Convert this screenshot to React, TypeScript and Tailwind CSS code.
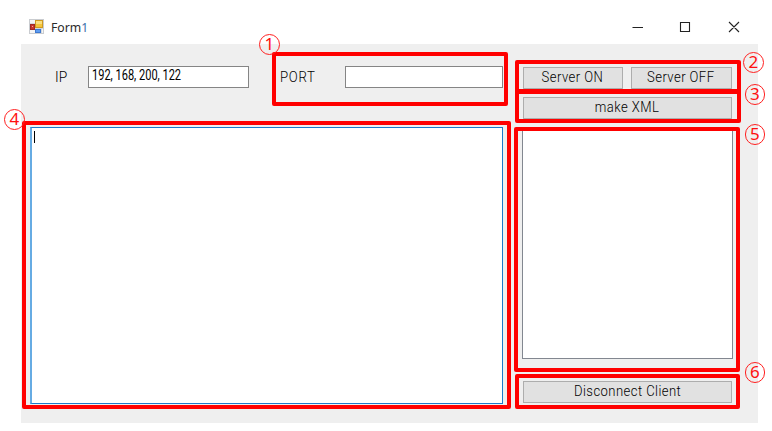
import type { ReactNode } from "react";

const frames = [
  "left-[272px] top-[52px] w-[236px] h-[54px]",
  "left-[515px] top-[60px] w-[226px] h-[34px]",
  "left-[515px] top-[89px] w-[226px] h-[34px]",
  "left-[22px] top-[121px] w-[489px] h-[288px]",
  "left-[514px] top-[127px] w-[226px] h-[245px]",
  "left-[515px] top-[374px] w-[225px] h-[35px]",
];

const badges = [
  "left-[259px] top-[34px]",
  "left-[743px] top-[52px]",
  "left-[744.5px] top-[84px]",
  "left-[4px] top-[109px]",
  "left-[744.5px] top-[124px]",
  "left-[744.5px] top-[362px]",
];

function Button({ className, children }: { className: string; children: ReactNode }) {
  return (
    <button
      className={`flex h-[22px] items-center justify-center whitespace-nowrap border border-[#adadad] bg-[#e1e1e1] pb-[2px] leading-none ${className}`}
    >
      <span className="inline-block scale-x-[0.87] tracking-[0.5px]">{children}</span>
    </button>
  );
}

function FormIcon() {
  return (
    <svg width="15" height="15" viewBox="0 0 15 15">
      <rect x="0.5" y="0.5" width="14" height="14" fill="#f4f4f4" stroke="#c9ccd0" />
      <path d="M6.5 1v13M1 9.5h13M1 4.5h5M12.5 10v4" stroke="#d5d8dc" fill="none" />
      <rect x="6.5" y="1.5" width="7" height="7" fill="#f5c53b" stroke="#cf9a20" />
      <path d="M7 2h6v3H7z" fill="#fbdf7c" />
      <rect x="1.5" y="5.5" width="4" height="5" fill="#c9352a" stroke="#9f2a23" />
      <path d="M3 7h1v1H3z" fill="#f3a59c" />
      <rect x="6.5" y="10.5" width="5" height="3" fill="#5d9cf0" stroke="#3e79d0" />
    </svg>
  );
}

export default function App() {
  return (
    <div className="relative h-[431px] w-[772px] overflow-hidden bg-white font-['Roboto','Noto_Sans_CJK_KR',sans-serif] text-[15px] font-light text-black">
      <div className="ml-[21px] flex w-[737px] flex-col">
        <header className="flex h-[44px] shrink-0 items-start pl-[8px] pt-[19px]">
          <FormIcon />
          <h1 className="ml-[7px] w-[36px] whitespace-nowrap font-['Noto_Sans',sans-serif] text-[13px] font-normal leading-[16px] text-[#2a2a2a]">
            <span className="inline-block origin-left scale-x-[0.94]">
              Form<span className="text-[#3a6ea8]">1</span>
            </span>
          </h1>
          <svg className="ml-[545px]" width="108" height="15" viewBox="0 0 108 15" fill="none" stroke="#222" strokeWidth="1.1">
            <path d="M0.5 8.5h10.5M48.5 3.5h9v9h-9zM97 3l10 10M107 3L97 13" />
          </svg>
        </header>

        <main className="flex h-[379px] bg-[#efefef]">
          <section className="ml-[9px] flex w-[473px] flex-col pt-[22px]">
            <div className="flex h-[22px]">
              <label className="w-[58px] pl-[25px] leading-[22px]">
                <span className="inline-block origin-left scale-x-[0.92]">IP</span>
              </label>
              <div className="w-[161px] border border-[#858585] bg-white pl-[3px] leading-[17px]">
                <span className="inline-block origin-left scale-x-[0.735] whitespace-nowrap font-normal">192, 168, 200, 122</span>
              </div>
              <label className="w-[96px] pl-[31px] leading-[22px]">
                <span className="inline-block origin-left scale-x-[0.88] tracking-[0.8px]">PORT</span>
              </label>
              <div className="w-[158px] border border-[#858585] bg-white" />
            </div>
            <div className="mt-[39px] h-[277px] border border-l-2 border-[#1b7acb] border-l-[#66abe3] bg-white pl-[2px] pt-[3px]">
              <div className="h-[12px] w-px bg-black" />
            </div>
          </section>

          <aside className="ml-[19px] flex w-[211px] flex-col pt-[23px]">
            <div className="flex justify-between px-px">
              <Button className="w-[100px] pr-[2px]">Server ON</Button>
              <Button className="w-[101px] pr-[2px]">Server OFF</Button>
            </div>
            <Button className="mx-px mt-[8px]">make XML</Button>
            <div className="mt-[8px] h-[232px] border border-[#828790] bg-white" />
            <Button className="mx-px mt-[22px]">Disconnect Client</Button>
          </aside>
        </main>
      </div>

      {frames.map((place) => (
        <div key={place} className={`pointer-events-none absolute rounded-[2px] border-4 border-[#ff0000] ${place}`} />
      ))}
      {badges.map((place, i) => (
        <span
          key={place}
          className={`absolute flex size-[20.5px] items-center justify-center rounded-full border border-[#ff2020] pb-px font-['Noto_Sans',sans-serif] text-[17px] font-normal leading-none text-[#ff1010] ${place}`}
        >
          {i + 1}
        </span>
      ))}
    </div>
  );
}
